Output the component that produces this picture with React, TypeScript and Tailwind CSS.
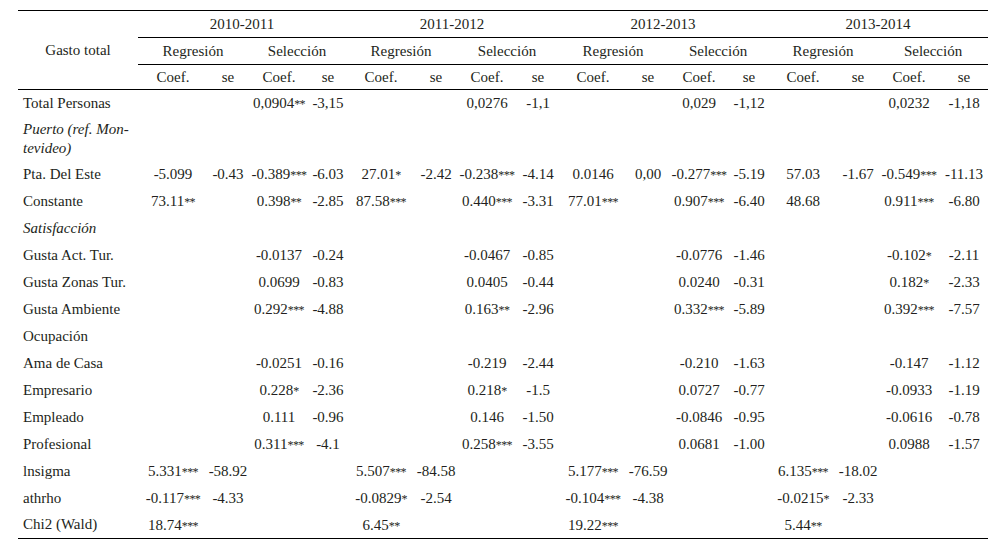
import React from 'react';

type Row = {
  label: string;
  italic?: boolean;
  wrap?: boolean;
  cells?: string[];
};

const years = ['2010-2011', '2011-2012', '2012-2013', '2013-2014'];

// column widths per year group: Coef./se (Regresión), Coef./se (Selección)
const groupWidths = [
  [70, 40, 62, 36],
  [70, 40, 62, 40],
  [70, 40, 62, 38],
  [70, 40, 62, 48],
];

const rows: Row[] = [
  { label: 'Total Personas', cells: ['', '', '0,0904**', '-3,15', '', '', '0,0276', '-1,1', '', '', '0,029', '-1,12', '', '', '0,0232', '-1,18'] },
  { label: 'Puerto (ref. Mon-', italic: true, wrap: true },
  { label: 'Pta. Del Este', cells: ['-5.099', '-0.43', '-0.389***', '-6.03', '27.01*', '-2.42', '-0.238***', '-4.14', '0.0146', '0,00', '-0.277***', '-5.19', '57.03', '-1.67', '-0.549***', '-11.13'] },
  { label: 'Constante', cells: ['73.11**', '', '0.398**', '-2.85', '87.58***', '', '0.440***', '-3.31', '77.01***', '', '0.907***', '-6.40', '48.68', '', '0.911***', '-6.80'] },
  { label: 'Satisfacción', italic: true },
  { label: 'Gusta Act. Tur.', cells: ['', '', '-0.0137', '-0.24', '', '', '-0.0467', '-0.85', '', '', '-0.0776', '-1.46', '', '', '-0.102*', '-2.11'] },
  { label: 'Gusta Zonas Tur.', cells: ['', '', '0.0699', '-0.83', '', '', '0.0405', '-0.44', '', '', '0.0240', '-0.31', '', '', '0.182*', '-2.33'] },
  { label: 'Gusta Ambiente', cells: ['', '', '0.292***', '-4.88', '', '', '0.163**', '-2.96', '', '', '0.332***', '-5.89', '', '', '0.392***', '-7.57'] },
  { label: 'Ocupación' },
  { label: 'Ama de Casa', cells: ['', '', '-0.0251', '-0.16', '', '', '-0.219', '-2.44', '', '', '-0.210', '-1.63', '', '', '-0.147', '-1.12'] },
  { label: 'Empresario', cells: ['', '', '0.228*', '-2.36', '', '', '0.218*', '-1.5', '', '', '0.0727', '-0.77', '', '', '-0.0933', '-1.19'] },
  { label: 'Empleado', cells: ['', '', '0.111', '-0.96', '', '', '0.146', '-1.50', '', '', '-0.0846', '-0.95', '', '', '-0.0616', '-0.78'] },
  { label: 'Profesional', cells: ['', '', '0.311***', '-4.1', '', '', '0.258***', '-3.55', '', '', '0.0681', '-1.00', '', '', '0.0988', '-1.57'] },
  { label: 'lnsigma', cells: ['5.331***', '-58.92', '', '', '5.507***', '-84.58', '', '', '5.177***', '-76.59', '', '', '6.135***', '-18.02', '', ''] },
  { label: 'athrho', cells: ['-0.117***', '-4.33', '', '', '-0.0829*', '-2.54', '', '', '-0.104***', '-4.38', '', '', '-0.0215*', '-2.33', '', ''] },
  { label: 'Chi2 (Wald)', cells: ['18.74***', '', '', '', '6.45**', '', '', '', '19.22***', '', '', '', '5.44**', '', '', ''] },
];

// significance stars are set smaller and tighter, as in the printed table
function Value({ text }: { text: string }) {
  const m = text.match(/^(.*?)(\**)$/);
  const num = m ? m[1] : text;
  const stars = m ? m[2] : '';
  return (
    <>
      {num}
      {stars && <span className="text-[12px] tracking-[-0.6px]">{stars}</span>}
    </>
  );
}

export default function App() {
  return (
    <div className="w-[1005px] h-[545px] bg-white pt-[10px] pl-[18px] font-['Liberation_Serif',serif] text-[15px] text-[#231f20]">
      <table className="table-fixed border-collapse w-[970px]">
        <colgroup>
          <col className="w-[120px]" />
          {groupWidths.flat().map((w, i) => (
            <col key={i} style={{ width: w }} />
          ))}
        </colgroup>
        <thead>
          <tr className="h-[27px] border-t border-black">
            <th rowSpan={3} className="font-normal text-center align-middle border-b border-black p-0">
              Gasto total
            </th>
            {years.map(y => (
              <th key={y} colSpan={4} className="font-normal text-center p-0 border-b border-black">
                {y}
              </th>
            ))}
          </tr>
          <tr className="h-[27px]">
            {years.map(y => (
              <React.Fragment key={y}>
                <th colSpan={2} className="font-normal text-center p-0 border-b border-black">Regresión</th>
                <th colSpan={2} className="font-normal text-center p-0 border-b border-black">Selección</th>
              </React.Fragment>
            ))}
          </tr>
          <tr className="h-[25px] border-b border-black">
            {years.map(y => (
              <React.Fragment key={y}>
                <th className="font-normal text-center p-0">Coef.</th>
                <th className="font-normal text-center p-0">se</th>
                <th className="font-normal text-center p-0">Coef.</th>
                <th className="font-normal text-center p-0">se</th>
              </React.Fragment>
            ))}
          </tr>
        </thead>
        <tbody className="border-b border-black">
          {rows.map(row => (
            <tr key={row.label} className={row.wrap ? 'h-[44px]' : 'h-[27px]'}>
              <td className={`pl-[5px] py-0 leading-[19px] whitespace-nowrap ${row.italic ? 'italic' : ''}`}>
                {row.wrap ? (
                  <>
                    {row.label}
                    <br />
                    tevideo)
                  </>
                ) : (
                  row.label
                )}
              </td>
              {(row.cells ?? Array(16).fill('')).map((c, i) => (
                <td key={i} className="text-center p-0 whitespace-nowrap">
                  <Value text={c} />
                </td>
              ))}
            </tr>
          ))}
        </tbody>
      </table>
    </div>
  );
}
